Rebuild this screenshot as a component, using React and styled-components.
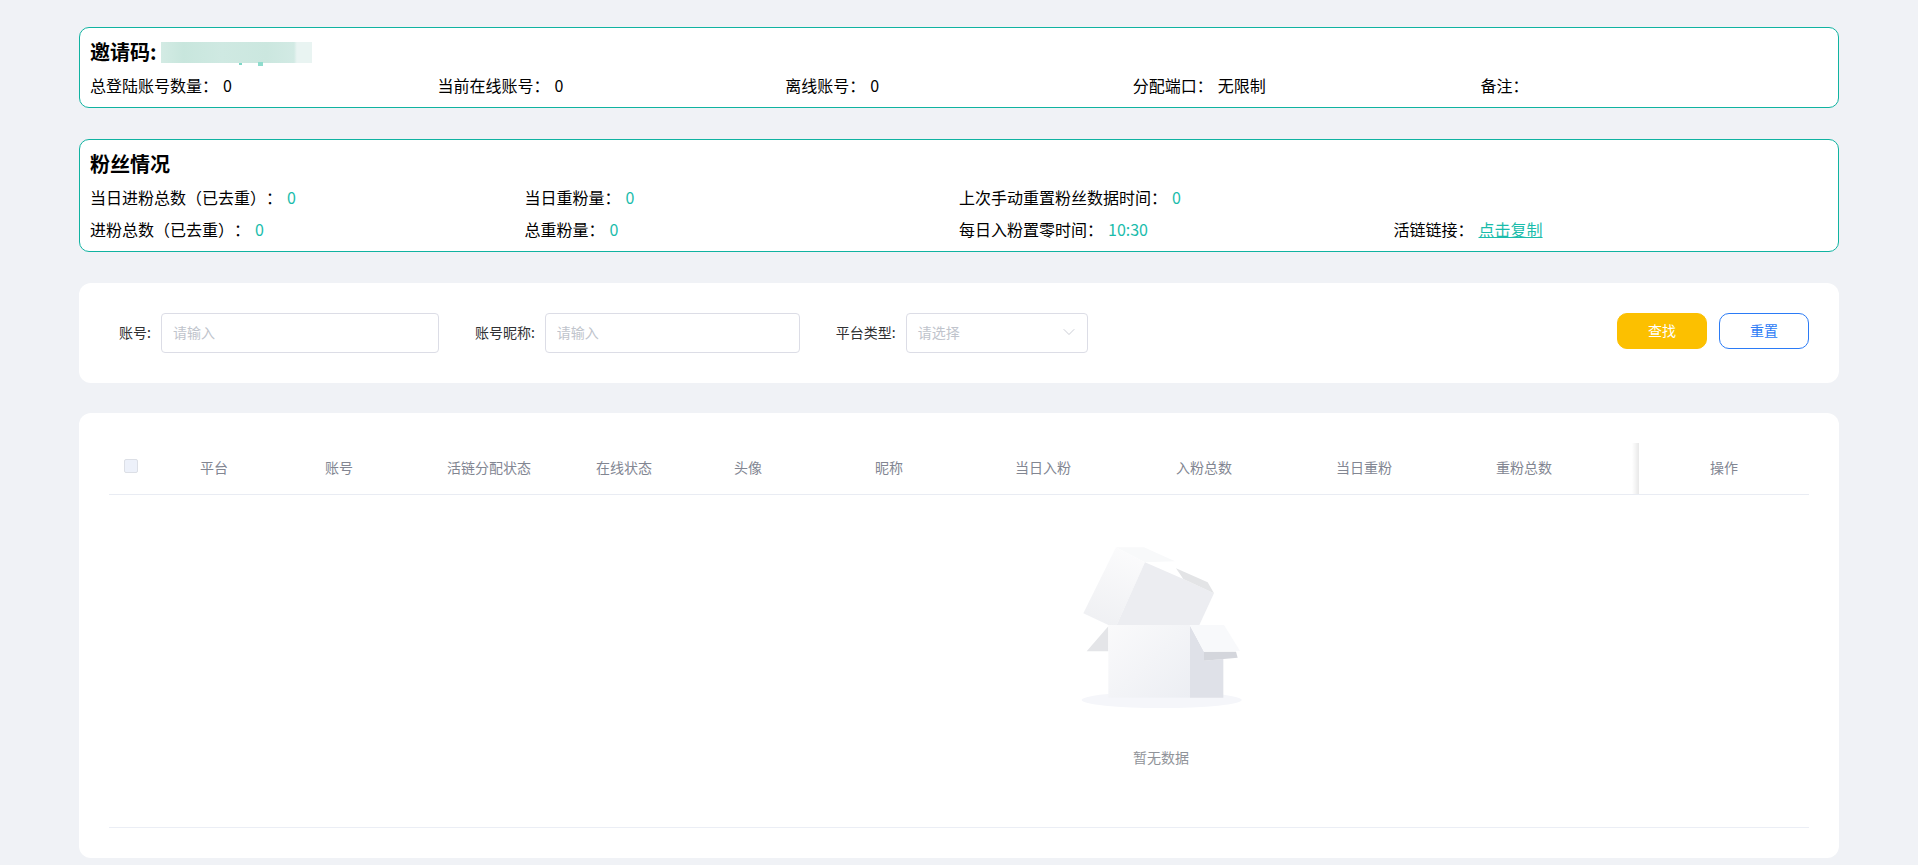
import styled, { createGlobalStyle } from "styled-components";
import { ChevronDown } from "lucide-react";

const TEAL = "#1abcab";
const TEAL_BORDER = "#10b3a1";

const GlobalStyle = createGlobalStyle`
    html, body {
        margin: 0;
        padding: 0;
        background: #f0f2f6;
    }
    body {
        font-family: "Noto Sans CJK SC", "Liberation Sans", sans-serif;
        color: #000;
        text-spacing-trim: space-all;
    }
    * {
        box-sizing: border-box;
    }
`;

const Page = styled.div`
    display: flex;
    flex-direction: column;
    width: 1918px;
    height: 865px;
    padding: 27px 79px 7px 79px;
    overflow: hidden;
`;

const StatCard = styled.section`
    margin-bottom: 31px;
    padding: 9px 10px 5px 10px;
    background: #fff;
    border: 1px solid ${TEAL_BORDER};
    border-radius: 10px;
`;

const CardTitle = styled.h2`
    display: flex;
    align-items: center;
    margin: 0 0 3px;
    height: 30px;
    font-size: 20px;
    line-height: 30px;
    font-weight: 700;
`;

const Redaction = styled.div`
    position: relative;
    width: 151px;
    height: 21px;
    margin-left: 4px;
    background: linear-gradient(
        90deg,
        #d3ebe4 0%,
        #c8e6dd 15%,
        #cfe9e2 40%,
        #cbe7df 70%,
        #d2eae4 88%,
        #e9f4f2 90%,
        #e9f4f2 100%
    );

    &::after {
        content: "";
        position: absolute;
        left: 78px;
        bottom: -2px;
        width: 3px;
        height: 2px;
        background: #7dd6c6;
        box-shadow: 20px 0 0 1px #8fdccd;
    }
`;

const StatGrid = styled.div`
    display: grid;
    grid-template-columns: repeat(${(p) => p.$cols}, 1fr);
`;

const Stat = styled.div`
    display: flex;
    height: 32px;
    font-size: 16px;
    line-height: 30px;
    white-space: nowrap;
`;

const StatValue = styled.span`
    margin-left: 5px;
    color: ${(p) => (p.$accent ? TEAL : "#000")};
`;

const CopyLink = styled.a`
    margin-left: 5px;
    color: ${TEAL};
    text-decoration: underline;
    cursor: pointer;
`;

const Panel = styled.section`
    background: #fff;
    border-radius: 12px;
`;

const FilterPanel = styled(Panel)`
    display: flex;
    align-items: flex-start;
    gap: 36px;
    height: 100px;
    margin-bottom: 30px;
    padding: 30px 30px 0 40px;
`;

const Field = styled.label`
    display: flex;
    align-items: center;
    height: 40px;
    font-size: 14px;
    color: #303133;
`;

const FieldLabel = styled.span`
    margin-right: 10px;
    padding-bottom: 2px;
    white-space: nowrap;
`;

const TextInput = styled.input`
    width: ${(p) => p.$width}px;
    height: 40px;
    padding: 0 11px 2px;
    font-family: inherit;
    font-size: 14px;
    background: #fff;
    border: 1px solid #dcdde6;
    border-radius: 4px;
    outline: none;

    &::placeholder {
        color: #c0c4cc;
    }
`;

const SelectBox = styled.div`
    display: flex;
    align-items: center;
    justify-content: space-between;
    width: 182px;
    height: 40px;
    padding: 0 8px 2px 11px;
    color: #c0c4cc;
    border: 1px solid #dcdde6;
    border-radius: 4px;
`;

const Buttons = styled.div`
    display: flex;
    gap: 12px;
    margin-left: auto;
`;

const Button = styled.button`
    width: 90px;
    height: 36px;
    padding: 0 0 2px;
    font-family: inherit;
    font-size: 14px;
    color: ${(p) => (p.$primary ? "#fff" : "#2b7bf6")};
    background: ${(p) => (p.$primary ? "#fcc000" : "#fff")};
    border: 1px solid ${(p) => (p.$primary ? "#fcc000" : "#2b7bf6")};
    border-radius: 10px;
    cursor: pointer;
`;

const TablePanel = styled(Panel)`
    flex: 1;
    padding: 30px 30px 0 30px;
`;

const HeaderRow = styled.div`
    display: grid;
    grid-template-columns: 43px 124px 126px 174px 96px 152px 130px 178px 144px 176px 144px 43px 170px;
    height: 52px;
    border-bottom: 1px solid #e9ecf3;
`;

const HeaderCell = styled.div`
    display: flex;
    align-items: center;
    justify-content: center;
    padding-bottom: 3px;
    font-size: 14px;
    color: #828692;
`;

const FixedCell = styled(HeaderCell)`
    position: relative;

    &::before {
        content: "";
        position: absolute;
        top: 0;
        bottom: 0;
        left: -7px;
        width: 7px;
        background: linear-gradient(90deg, rgba(0, 0, 0, 0), rgba(0, 0, 0, 0.09));
    }
`;

const CheckBox = styled.span`
    display: block;
    width: 14px;
    height: 14px;
    margin-top: -3px;
    background: #edf1fa;
    border: 1px solid #dcdfe6;
    border-radius: 2px;
`;

const TableBody = styled.div`
    display: flex;
    flex-direction: column;
    align-items: center;
    height: 333px;
    padding: 34px 0 0 404px;
    border-bottom: 1px solid #ebeef5;
`;

const EmptyText = styled.div`
    margin-top: 18px;
    font-size: 14px;
    line-height: 20px;
    color: #909399;
`;

function EmptyBox() {
    return (
        <svg width="210" height="200" viewBox="-12 0 630 600">
            <defs>
                <linearGradient id="front" x1="0" y1="0" x2="1" y2="1">
                    <stop offset="0" stopColor="#fafafb" />
                    <stop offset="1" stopColor="#eceef3" />
                </linearGradient>
                <linearGradient id="lidLeft" x1="0.6" y1="0" x2="0.3" y2="1">
                    <stop offset="0" stopColor="#fbfbfc" />
                    <stop offset="1" stopColor="#eff0f3" />
                </linearGradient>
            </defs>
            <ellipse cx="305" cy="513" rx="240" ry="24" fill="#f5f6fa" />
            <polygon points="168,55 252,55 345,97 255,100" fill="#f8f9fa" />
            <polygon points="168,55 255,100 170,288 145,288 70,253" fill="url(#lidLeft)" />
            <polygon points="255,100 370,150 462,193 418,288 170,288" fill="#ecedf1" />
            <polygon points="348,118 443,160 462,193 370,150" fill="#e3e4e6" />
            <polygon points="145,292 145,367 80,367" fill="#e4e5e8" />
            <rect x="145" y="288" width="245" height="218" fill="url(#front)" />
            <polygon points="390,290 432,368 432,395 490,390 490,506 390,506" fill="#dfe1e8" />
            <polygon points="432,368 528,368 533,386 432,395" fill="#d4d6dc" />
            <polygon points="390,288 492,288 540,366 432,368" fill="#f8f9fb" />
        </svg>
    );
}

const COLUMNS = ["平台", "账号", "活链分配状态", "在线状态", "头像", "昵称", "当日入粉", "入粉总数", "当日重粉", "重粉总数"];

export default function App() {
    return (
        <Page>
            <GlobalStyle />
            <StatCard>
                <CardTitle>
                    邀请码:
                    <Redaction />
                </CardTitle>
                <StatGrid $cols={5}>
                    <Stat>总登陆账号数量：<StatValue>0</StatValue></Stat>
                    <Stat>当前在线账号：<StatValue>0</StatValue></Stat>
                    <Stat>离线账号：<StatValue>0</StatValue></Stat>
                    <Stat>分配端口：<StatValue>无限制</StatValue></Stat>
                    <Stat>备注：</Stat>
                </StatGrid>
            </StatCard>

            <StatCard>
                <CardTitle>粉丝情况</CardTitle>
                <StatGrid $cols={4}>
                    <Stat>当日进粉总数（已去重）：<StatValue $accent>0</StatValue></Stat>
                    <Stat>当日重粉量：<StatValue $accent>0</StatValue></Stat>
                    <Stat>上次手动重置粉丝数据时间：<StatValue $accent>0</StatValue></Stat>
                    <Stat />
                    <Stat>进粉总数（已去重）：<StatValue $accent>0</StatValue></Stat>
                    <Stat>总重粉量：<StatValue $accent>0</StatValue></Stat>
                    <Stat>每日入粉置零时间：<StatValue $accent>10:30</StatValue></Stat>
                    <Stat>活链链接：<CopyLink>点击复制</CopyLink></Stat>
                </StatGrid>
            </StatCard>

            <FilterPanel>
                <Field>
                    <FieldLabel>账号:</FieldLabel>
                    <TextInput $width={278} placeholder="请输入" />
                </Field>
                <Field>
                    <FieldLabel>账号昵称:</FieldLabel>
                    <TextInput $width={255} placeholder="请输入" />
                </Field>
                <Field>
                    <FieldLabel>平台类型:</FieldLabel>
                    <SelectBox>
                        请选择
                        <ChevronDown size={20} strokeWidth={1} color="#c0c4cc" />
                    </SelectBox>
                </Field>
                <Buttons>
                    <Button $primary>查找</Button>
                    <Button>重置</Button>
                </Buttons>
            </FilterPanel>

            <TablePanel>
                <HeaderRow>
                    <HeaderCell>
                        <CheckBox />
                    </HeaderCell>
                    {COLUMNS.map((name) => (
                        <HeaderCell key={name}>{name}</HeaderCell>
                    ))}
                    <HeaderCell />
                    <FixedCell>操作</FixedCell>
                </HeaderRow>
                <TableBody>
                    <EmptyBox />
                    <EmptyText>暂无数据</EmptyText>
                </TableBody>
            </TablePanel>
        </Page>
    );
}
